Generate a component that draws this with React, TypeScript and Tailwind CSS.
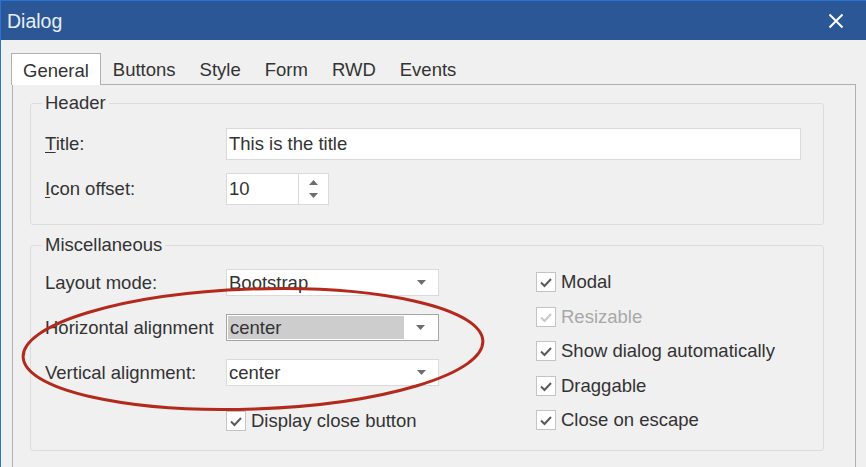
import type { ReactNode } from "react";

const TABS = ["General", "Buttons", "Style", "Form", "RWD", "Events"];

const OPTIONS = [
  { label: "Modal", checked: true },
  { label: "Resizable", checked: true, disabled: true },
  { label: "Show dialog automatically", checked: true },
  { label: "Draggable", checked: true },
  { label: "Close on escape", checked: true },
];

function Arrow({ up = false }: { up?: boolean }) {
  return (
    <svg width="9" height="5" viewBox="0 0 9 5" className={up ? "rotate-180" : ""}>
      <path d="M0 0 H9 L4.5 5 Z" fill="#6e6e6e" />
    </svg>
  );
}

function Checkbox({ label, checked, disabled }: { label: string; checked?: boolean; disabled?: boolean }) {
  return (
    <div className="flex h-[20px] items-center gap-[5px]">
      <div className="flex h-[20px] w-[20px] items-center justify-center border border-[#c4c4c4] bg-white">
        {checked && (
          <svg width="14" height="14" viewBox="0 0 14 14">
            <path d="M2 7.5 L5.5 11 L12 4" fill="none" stroke={disabled ? "#c8c8c8" : "#5a5a5a"} strokeWidth="2" />
          </svg>
        )}
      </div>
      <span className={disabled ? "text-[#a8a8a8]" : "text-[#333]"}>{label}</span>
    </div>
  );
}

function Select({ value, focused }: { value: string; focused?: boolean }) {
  return (
    <div
      className={`flex h-[27px] w-[213px] items-center border bg-white ${
        focused ? "border-[#a6a6a6] p-px" : "border-[#dadada]"
      }`}
    >
      <div className={`flex h-full flex-1 items-center pl-[2px] ${focused ? "bg-[#cdcdcd]" : ""}`}>{value}</div>
      <div className="flex w-[33px] justify-center">
        <Arrow />
      </div>
    </div>
  );
}

function Row({ label, children }: { label: ReactNode; children: ReactNode }) {
  return (
    <div className="flex items-center">
      <div className="w-[181px]">{label}</div>
      {children}
    </div>
  );
}

export default function App() {
  return (
    <div className="relative h-[467px] w-[866px] overflow-hidden border-l border-t border-[#2a73d4] bg-[#f0f0f0] font-['Liberation_Sans',Arial,sans-serif] text-[18.5px] leading-[20px] text-[#333]">
      {/* title bar */}
      <div className="flex h-[39px] items-center justify-between bg-[#2b5797] pl-[6px] pr-[22px]">
        <span className="text-[19.5px] text-[#e8eef7]">Dialog</span>
        <svg width="16" height="16" viewBox="0 0 16 16">
          <path d="M1.5 1.5 L14.5 14.5 M14.5 1.5 L1.5 14.5" stroke="#fff" strokeWidth="2" />
        </svg>
      </div>

      {/* tabs */}
      <div className="mt-[13px] flex pl-[10px]">
        {TABS.map((t, i) => (
          <div
            key={t}
            className={`relative z-10 -mb-px flex h-[32px] items-center px-[11px] pt-[2px] ${
              i === 0 ? "border border-b-0 border-[#b0b0b0] bg-white" : "border border-transparent"
            }`}
          >
            {t}
          </div>
        ))}
      </div>

      <div className="ml-[11px] mr-[10px] h-[420px] border border-[#b0b0b0] px-[17px]">
        <fieldset className="mt-[8px] w-[794px] rounded-[3px] border border-[#dcdcdc] pb-[19px] pl-[14px] pt-[15px]">
          <legend className="-ml-[3px] px-[3px]">Header</legend>
          <div className="flex flex-col gap-[13px]">
            <Row
              label={
                <span>
                  <u className="underline-offset-2">T</u>itle:
                </span>
              }
            >
              <div className="flex h-[32px] w-[575px] items-center border border-[#dadada] bg-white pl-[2px]">
                This is the title
              </div>
            </Row>
            <Row
              label={
                <span>
                  <u className="underline-offset-2">I</u>con offset:
                </span>
              }
            >
              <div className="flex h-[32px]">
                <div className="flex w-[73px] items-center border border-[#dadada] bg-white pl-[2px]">10</div>
                <div className="flex w-[30px] flex-col items-center justify-center gap-[8px] border border-l-0 border-[#dadada] bg-white">
                  <Arrow up />
                  <Arrow />
                </div>
              </div>
            </Row>
          </div>
        </fieldset>

        <fieldset className="mt-[10px] w-[794px] rounded-[3px] border border-[#dcdcdc] pb-[19px] pl-[14px] pt-[14px]">
          <legend className="-ml-[3px] px-[3px]">Miscellaneous</legend>
          <div className="flex">
            <div className="flex flex-col gap-[18px]">
              <Row label="Layout mode:">
                <Select value="Bootstrap" />
              </Row>
              <Row label="Horizontal alignment">
                <Select value="center" focused />
              </Row>
              <Row label="Vertical alignment:">
                <Select value="center" />
              </Row>
              <div className="mt-[7px] pl-[181px]">
                <Checkbox label="Display close button" checked />
              </div>
            </div>
            <div className="ml-[97px] mt-[3px] flex flex-col gap-[14.5px]">
              {OPTIONS.map((o) => (
                <Checkbox key={o.label} {...o} />
              ))}
            </div>
          </div>
        </fieldset>
      </div>

      {/* annotation */}
      <svg className="pointer-events-none absolute left-0 top-0" width="866" height="467">
        <ellipse
          cx="252"
          cy="348"
          rx="230"
          ry="60"
          transform="rotate(-2 252 348)"
          fill="none"
          stroke="#b3291b"
          strokeWidth="3"
        />
      </svg>
    </div>
  );
}
